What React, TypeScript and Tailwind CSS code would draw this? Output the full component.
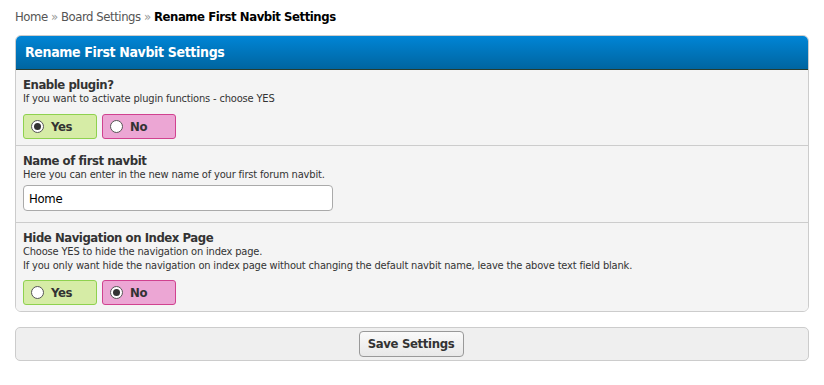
import { useState } from 'react'

// MyBB-style plugin settings page: breadcrumb, one settings panel, save bar.

const FONT = "font-['DejaVu_Sans_Condensed','Liberation_Sans',sans-serif] [font-stretch:condensed]"

type Choice = 'yes' | 'no'

function RadioDot({ checked }: { checked: boolean }) {
  return (
    <span className="flex h-[13px] w-[13px] items-center justify-center rounded-full border border-[#555] bg-white">
      {checked && <span className="h-[7px] w-[7px] rounded-full bg-[#333]" />}
    </span>
  )
}

function YesNo({ value, onChange }: { value: Choice; onChange: (v: Choice) => void }) {
  return (
    <div className="flex gap-[5px]">
      <button
        type="button"
        onClick={() => onChange('yes')}
        className={`flex h-[25px] w-[74px] items-center gap-[7px] rounded-[3px] border border-[#8fd14f] bg-[#d6eca6] pl-[7px] text-[13px] font-bold tracking-[-0.3px] text-[#333] ${FONT}`}
      >
        <RadioDot checked={value === 'yes'} />
        Yes
      </button>
      <button
        type="button"
        onClick={() => onChange('no')}
        className={`flex h-[25px] w-[74px] items-center gap-[7px] rounded-[3px] border border-[#d0428f] bg-[#eca6d4] pl-[7px] text-[13px] font-bold tracking-[-0.3px] text-[#333] ${FONT}`}
      >
        <RadioDot checked={value === 'no'} />
        No
      </button>
    </div>
  )
}

function SettingRow({
  title,
  desc,
  gap,
  bottom,
  last,
  children,
}: {
  title: string
  desc: React.ReactNode
  gap: string
  bottom: string
  last?: boolean
  children: React.ReactNode
}) {
  return (
    <div className={`bg-[#f4f4f4] px-[7px] pt-[8px] ${bottom} ${last ? '' : 'border-b border-[#ccc]'}`}>
      <div className="text-[13px] font-bold leading-[14px] tracking-[-0.45px] text-[#333]">{title}</div>
      <div className="text-[11px] leading-[14px] tracking-[-0.17px] text-[#333]">{desc}</div>
      <div className={gap}>{children}</div>
    </div>
  )
}

export default function App() {
  const [enabled, setEnabled] = useState<Choice>('yes')
  const [hideNav, setHideNav] = useState<Choice>('no')
  const [name, setName] = useState('Home')

  return (
    <div className={`min-h-[385px] bg-white px-[15px] pt-[9px] ${FONT}`}>
      {/* Breadcrumb */}
      <div className="text-[13px] leading-[16px] tracking-[-0.45px] text-[#555]">
        <a href="#" className="text-[#555]">Home</a>
        <span className="text-[#999]"> » </span>
        <a href="#" className="text-[#555]">Board Settings</a>
        <span className="text-[#999]"> » </span>
        <span className="font-bold text-[#000]">Rename First Navbit Settings</span>
      </div>

      {/* Settings panel */}
      <div className="mt-[10px] w-[794px] overflow-hidden rounded-[6px] border border-[#ccc]">
        <div className="h-[34px] border-b border-[#263c30] bg-gradient-to-b from-[#0085d6] to-[#0065a0] px-[9px] pt-[8px] text-[14px] font-bold leading-[16px] tracking-[-0.35px] text-white">
          Rename First Navbit Settings
        </div>

        <SettingRow
          title="Enable plugin?"
          desc="If you want to activate plugin functions - choose YES"
          gap="mt-[8px]"
          bottom="pb-[6px]"
        >
          <YesNo value={enabled} onChange={setEnabled} />
        </SettingRow>

        <SettingRow
          title="Name of first navbit"
          desc="Here you can enter in the new name of your first forum navbit."
          gap="mt-[3px]"
          bottom="pb-[11px]"
        >
          <input
            value={name}
            onChange={(e) => setName(e.target.value)}
            className={`block h-[26px] w-[310px] rounded-[4px] border border-[#aaa] bg-white px-[5px] text-[13px] tracking-[-0.3px] text-black outline-none ${FONT}`}
          />
        </SettingRow>

        <SettingRow
          last
          title="Hide Navigation on Index Page"
          desc={
            <>
              Choose YES to hide the navigation on index page.
              <br />
              If you only want hide the navigation on index page without changing the default navbit name,
              leave the above text field blank.
            </>
          }
          gap="mt-[7px]"
          bottom="pb-[6px]"
        >
          <YesNo value={hideNav} onChange={setHideNav} />
        </SettingRow>
      </div>

      {/* Save bar */}
      <div className="mt-[15px] flex h-[34px] w-[794px] items-center justify-center rounded-[5px] border border-[#ccc] bg-[#efefef]">
        <button
          type="button"
          className={`-ml-[2px] h-[26px] w-[105px] rounded-[4px] border border-[#999] bg-gradient-to-b from-[#fafafa] to-[#e8e8e8] text-[13px] font-bold tracking-[-0.35px] text-[#333] ${FONT}`}
        >
          Save Settings
        </button>
      </div>
    </div>
  )
}
